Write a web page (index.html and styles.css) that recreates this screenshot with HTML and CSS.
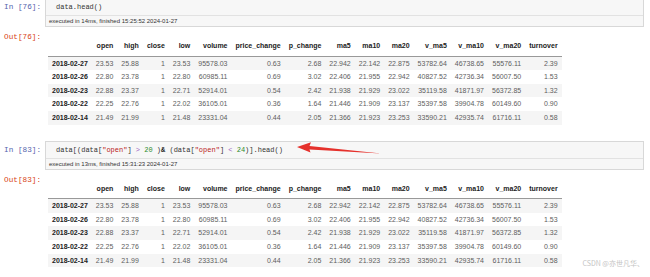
FILE: index.html
```html
<!DOCTYPE html>
<html lang="zh">
<head>
    <meta charset="UTF-8">
    <title>data.head()</title>
    <link rel="stylesheet" href="styles.css">
</head>
<body>
<div class="notebook">

    <div class="cell">
        <div class="input">
            <div class="prompt prompt-in">In&nbsp;[76]:</div>
            <div class="input-box">
                <div class="code">data.head()</div>
                <div class="timing">executed in 14ms, finished 15:25:52 2024-01-27</div>
            </div>
        </div>
        <div class="output">
            <div class="prompt prompt-out">Out[76]:</div>
            <div class="output-body">
                <table class="df">
                    <thead>
                        <tr><th></th><th>open</th><th>high</th><th>close</th><th>low</th><th>volume</th><th>price_change</th><th>p_change</th><th>ma5</th><th>ma10</th><th>ma20</th><th>v_ma5</th><th>v_ma10</th><th>v_ma20</th><th>turnover</th></tr>
                    </thead>
                    <tbody>
                        <tr><th>2018-02-27</th><td>23.53</td><td>25.88</td><td>1</td><td>23.53</td><td>95578.03</td><td>0.63</td><td>2.68</td><td>22.942</td><td>22.142</td><td>22.875</td><td>53782.64</td><td>46738.65</td><td>55576.11</td><td>2.39</td></tr>
                        <tr><th>2018-02-26</th><td>22.80</td><td>23.78</td><td>1</td><td>22.80</td><td>60985.11</td><td>0.69</td><td>3.02</td><td>22.406</td><td>21.955</td><td>22.942</td><td>40827.52</td><td>42736.34</td><td>56007.50</td><td>1.53</td></tr>
                        <tr><th>2018-02-23</th><td>22.88</td><td>23.37</td><td>1</td><td>22.71</td><td>52914.01</td><td>0.54</td><td>2.42</td><td>21.938</td><td>21.929</td><td>23.022</td><td>35119.58</td><td>41871.97</td><td>56372.85</td><td>1.32</td></tr>
                        <tr><th>2018-02-22</th><td>22.25</td><td>22.76</td><td>1</td><td>22.02</td><td>36105.01</td><td>0.36</td><td>1.64</td><td>21.446</td><td>21.909</td><td>23.137</td><td>35397.58</td><td>39904.78</td><td>60149.60</td><td>0.90</td></tr>
                        <tr><th>2018-02-14</th><td>21.49</td><td>21.99</td><td>1</td><td>21.48</td><td>23331.04</td><td>0.44</td><td>2.05</td><td>21.366</td><td>21.923</td><td>23.253</td><td>33590.21</td><td>42935.74</td><td>61716.11</td><td>0.58</td></tr>
                    </tbody>
                </table>
            </div>
        </div>
    </div>

    <div class="cell">
        <div class="input">
            <div class="prompt prompt-in">In&nbsp;[83]:</div>
            <div class="input-box">
                <div class="code">data[(data[<span class="str">"open"</span>] <span class="op">&gt;</span> <span class="num">20</span> )<span class="amp">&amp;</span> (data[<span class="str">"open"</span>] <span class="op">&lt;</span> <span class="num">24</span>)].head()</div>
                <div class="timing">executed in 13ms, finished 15:31:23 2024-01-27</div>
            </div>
        </div>
        <div class="output">
            <div class="prompt prompt-out">Out[83]:</div>
            <div class="output-body">
                <table class="df">
                    <thead>
                        <tr><th></th><th>open</th><th>high</th><th>close</th><th>low</th><th>volume</th><th>price_change</th><th>p_change</th><th>ma5</th><th>ma10</th><th>ma20</th><th>v_ma5</th><th>v_ma10</th><th>v_ma20</th><th>turnover</th></tr>
                    </thead>
                    <tbody>
                        <tr><th>2018-02-27</th><td>23.53</td><td>25.88</td><td>1</td><td>23.53</td><td>95578.03</td><td>0.63</td><td>2.68</td><td>22.942</td><td>22.142</td><td>22.875</td><td>53782.64</td><td>46738.65</td><td>55576.11</td><td>2.39</td></tr>
                        <tr><th>2018-02-26</th><td>22.80</td><td>23.78</td><td>1</td><td>22.80</td><td>60985.11</td><td>0.69</td><td>3.02</td><td>22.406</td><td>21.955</td><td>22.942</td><td>40827.52</td><td>42736.34</td><td>56007.50</td><td>1.53</td></tr>
                        <tr><th>2018-02-23</th><td>22.88</td><td>23.37</td><td>1</td><td>22.71</td><td>52914.01</td><td>0.54</td><td>2.42</td><td>21.938</td><td>21.929</td><td>23.022</td><td>35119.58</td><td>41871.97</td><td>56372.85</td><td>1.32</td></tr>
                        <tr><th>2018-02-22</th><td>22.25</td><td>22.76</td><td>1</td><td>22.02</td><td>36105.01</td><td>0.36</td><td>1.64</td><td>21.446</td><td>21.909</td><td>23.137</td><td>35397.58</td><td>39904.78</td><td>60149.60</td><td>0.90</td></tr>
                        <tr><th>2018-02-14</th><td>21.49</td><td>21.99</td><td>1</td><td>21.48</td><td>23331.04</td><td>0.44</td><td>2.05</td><td>21.366</td><td>21.923</td><td>23.253</td><td>33590.21</td><td>42935.74</td><td>61716.11</td><td>0.58</td></tr>
                    </tbody>
                </table>
            </div>
        </div>
    </div>

    <!-- red annotation arrow pointing at the filter line -->
    <svg class="arrow" width="100" height="20" viewBox="290 140 100 20">
        <polygon points="297,147 311,142.3 309.5,146 381,153.6 309.5,149.6 310.5,152.6" fill="#e5312c"/>
    </svg>

    <div class="watermark">CSDN @亦世凡华、</div>
</div>
</body>
</html>
```

FILE: styles.css
```css
body {
    margin: 0;
    font-family: "Liberation Sans", Arial, sans-serif;
    color: #222;
    background: #fff;
}

.notebook {
    position: relative;
    height: 277px;
    overflow: hidden;
    margin-top: -2px;
}

.cell {
    margin-bottom: 16px;
}

.input,
.output {
    display: flex;
    align-items: flex-start;
}

.prompt {
    width: 41px;
    flex: none;
    padding-right: 4px;
    text-align: right;
    font-family: "Liberation Mono", monospace;
    font-size: 7.7px;
    line-height: 9px;
}

.prompt-in {
    color: #5563ad;
    padding-top: 5px;
}

.prompt-out {
    color: #d84315;
    padding-top: 6px;
}

.input-box {
    flex: 1;
    margin-right: 6px;
    border: 1px solid #d8d8d8;
    background-color: #f7f7f7;
}

.code {
    padding: 4px 10px;
    font-family: "Liberation Mono", monospace;
    font-size: 7px;
    line-height: 8px;
    color: #333;
    border-bottom: 1px solid #e2e2e2;
    white-space: pre;
}

.code .str {
    color: #ba2121;
}

.code .num {
    color: #2b8a2b;
}

.code .op {
    color: #9a5cc0;
}

.code .amp {
    font-weight: bold;
    color: #222;
}

.timing {
    padding: 0 3px;
    font-size: 6px;
    line-height: 10px;
    color: #333;
}

.output-body {
    padding: 12px 0 0 3px;
}

.df {
    border-collapse: collapse;
    border: none;
    font-size: 7px;
}

.df th,
.df td {
    padding: 3px 4px;
    line-height: 7.6px;
    text-align: right;
    white-space: nowrap;
}

.df td {
    color: #5e5e5e;
}

.df thead th {
    padding-bottom: 6px;
    font-weight: bold;
    color: #222;
    border-bottom: 1px solid #999;
}

.df tbody th {
    font-weight: bold;
    color: #222;
}

.df tbody tr:nth-child(odd) {
    background-color: #f5f5f5;
}

.arrow {
    position: absolute;
    left: 290px;
    top: 142px;
}

.watermark {
    position: absolute;
    right: 6px;
    bottom: 7px;
    font-family: "Noto Sans CJK SC", sans-serif;
    font-size: 7px;
    color: #c4c4c4;
}
```
